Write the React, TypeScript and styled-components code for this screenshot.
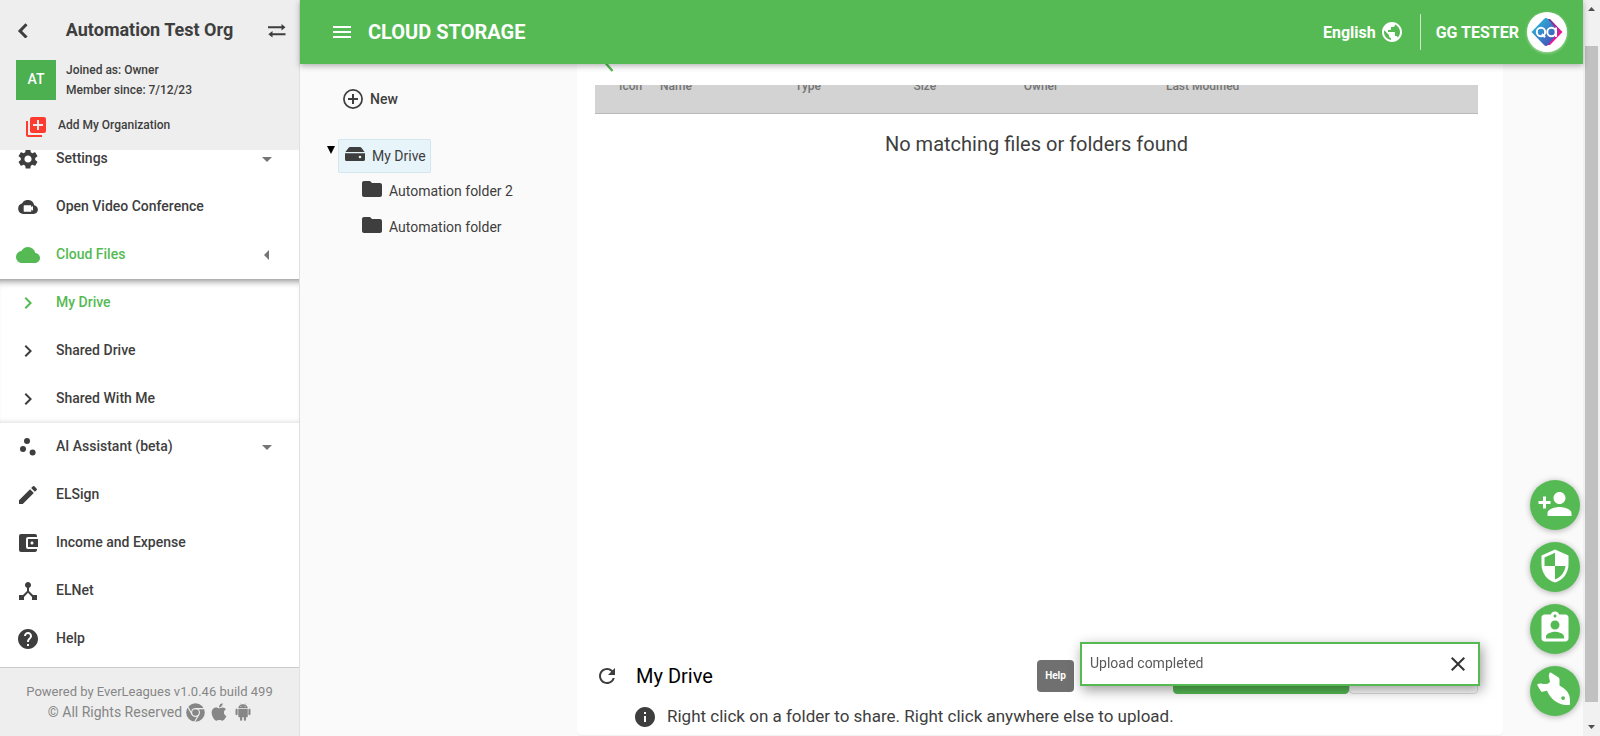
import React from "react";
import styled, { createGlobalStyle, css } from "styled-components";
import {
  MdAccountBalanceWallet,
  MdArrowDropDown,
  MdArrowLeft,
  MdAssignmentInd,
  MdChevronRight,
  MdClose,
  MdCloud,
  MdDeviceHub,
  MdEdit,
  MdFolder,
  MdHelp,
  MdInfo,
  MdLibraryAdd,
  MdMenu,
  MdPersonAdd,
  MdPublic,
  MdRefresh,
  MdScatterPlot,
  MdSecurity,
  MdSettings,
} from "react-icons/md";
import { FaApple } from "react-icons/fa";
import { AiFillAndroid } from "react-icons/ai";

const GREEN = "#55ba53";
const DARK = "#3e3e3e";

const GlobalStyle = createGlobalStyle`
  * { box-sizing: border-box; }
  html, body { height: 100%; margin: 0; }
  #root { height: 100%; }
  body {
    font-family: Roboto, "Liberation Sans", sans-serif;
    color: ${DARK};
    background: #fafafa;
    overflow: hidden;
  }
  button, select {
    font: inherit;
    color: inherit;
    background: none;
    border: 0;
    padding: 0;
    cursor: pointer;
  }
  a { color: inherit; text-decoration: none; }
  h1, h2, p, ul { margin: 0; padding: 0; }
  ul { list-style: none; }
  svg { display: block; flex: none; }
`;

const Shell = styled.div`
  display: flex;
  height: 100vh;
`;

/* Sidebar */

const Sidebar = styled.aside`
  display: flex;
  flex-direction: column;
  flex: none;
  width: 300px;
  background: #fff;
  border-right: 1px solid #e0e0e0;
`;

const OrgPanel = styled.div`
  flex: none;
  height: 150px;
  padding: 16px 12px 0 16px;
  background: #eee;
`;

const OrgTitleRow = styled.div`
  display: flex;
  align-items: center;
  justify-content: space-between;
  height: 28px;
`;

const OrgTitle = styled.h2`
  font-size: 18px;
  line-height: 28px;
  font-weight: 700;
`;

const OrgInfo = styled.div`
  display: flex;
  gap: 10px;
  margin-top: 16px;
  font-size: 12px;
  line-height: 20px;
  font-weight: 500;
`;

const OrgBadge = styled.div`
  width: 40px;
  height: 40px;
  background: #4caf50;
  color: #fff;
  font-size: 14px;
  line-height: 38px;
  text-align: center;
`;

const AddOrg = styled.button`
  display: flex;
  align-items: center;
  gap: 10px;
  margin-top: 11px;
  padding-left: 8px;
  font-size: 12px;
  line-height: 24px;
  font-weight: 500;

  svg { color: #ff3b30; margin-top: 4px; }
`;

const NavScroll = styled.nav`
  flex: 1;
  min-height: 0;
  overflow: hidden;
`;

const NavList = styled.ul`
  margin-top: -15px;
`;

const SubList = styled.ul`
  background: #fff;
  box-shadow: inset 0 8px 7px -6px #888, inset 0 -6px 5px -5px #ddd;
`;

const NavLink = styled.a<{ $active?: boolean }>`
  display: grid;
  grid-template-columns: 24px 1fr 24px;
  align-items: center;
  column-gap: 16px;
  height: 48px;
  padding: 0 20px 0 16px;
  font-size: 14px;
  font-weight: 500;
  color: ${(p) => (p.$active ? GREEN : DARK)};

  span { padding-bottom: 2px; }
  svg { justify-self: center; }
  svg:last-child:not(:first-child) { color: #757575; }
`;

const SidebarFooter = styled.footer`
  flex: none;
  height: 69px;
  padding-top: 14px;
  border-top: 1px solid #ccc;
  background: #eee;
  color: #868686;
  font-size: 13px;
  line-height: 20px;
  text-align: center;
`;

const Rights = styled.div`
  display: flex;
  align-items: center;
  justify-content: center;
  gap: 4px;
  height: 20px;
  padding-left: 2px;
  font-size: 14px;
`;

/* Main area */

const Main = styled.div`
  display: flex;
  flex-direction: column;
  flex: 1;
  min-width: 0;
  height: 100%;
`;

const TopBar = styled.header`
  position: relative;
  z-index: 1;
  display: flex;
  align-items: center;
  flex: none;
  height: 64px;
  padding: 0 16px 0 30px;
  background: ${GREEN};
  color: #fff;
  box-shadow: 0 2px 6px rgba(0, 0, 0, 0.3);
`;

const PageTitle = styled.h1`
  flex: 1;
  margin-left: 14px;
  font-size: 20px;
  font-weight: 700;
`;

const BarButton = styled.button`
  display: flex;
  align-items: center;
  gap: 4px;
  font-size: 16px;
  font-weight: 700;
`;

const Account = styled(BarButton)`
  gap: 8px;
  margin-left: 16px;
  padding-left: 15px;
  height: 36px;
  border-left: 1px solid rgba(255, 255, 255, 0.7);
`;

const Avatar = styled.span`
  display: grid;
  place-items: center;
  width: 40px;
  height: 40px;
  border-radius: 50%;
  background: #fff;
  box-shadow: 0 1px 3px rgba(255, 255, 255, 0.5);
`;

const Workspace = styled.div`
  display: flex;
  flex: 1;
  min-height: 0;
`;

const TreePanel = styled.section`
  flex: none;
  width: 277px;
  padding: 23px 0 0 27px;
`;

const NewButton = styled.button`
  display: flex;
  align-items: center;
  gap: 7px;
  margin-left: 16px;
  font-size: 14px;
  line-height: 24px;
  font-weight: 500;
`;

const TreeRoot = styled.div`
  display: flex;
  align-items: flex-start;
  gap: 3px;
  margin-top: 28px;
`;

const TreeToggle = styled.button`
  width: 8px;
  margin-top: 7px;
  color: #000;
`;

const TreeItem = styled.button<{ $selected?: boolean }>`
  display: flex;
  align-items: center;
  gap: 7px;
  height: 34px;
  padding: 0 4px 0 6px;
  border: 1px solid transparent;
  border-radius: 2px;
  font-size: 14px;

  svg { margin-bottom: 5px; }

  ${(p) =>
    p.$selected &&
    css`
      background: #e7f4f9;
      border-color: #d3e6ee;
    `}
`;

const TreeChildren = styled.ul`
  padding-left: 26px;

  li { height: 36px; padding-top: 1px; }
  ${TreeItem} { gap: 5px; }
`;

const FilePanel = styled.main`
  display: flex;
  flex-direction: column;
  flex: 1;
  min-width: 0;
  margin: 0 80px 1px 0;
  padding: 0 25px 0 18px;
  border-radius: 0 0 5px 5px;
  background: #fff;
  box-shadow: 0 1px 1px #f0f0f0;
`;

const BackStrip = styled.div`
  flex: none;
  height: 21px;
  overflow: hidden;
  padding-left: 8px;
  color: ${GREEN};
`;

const BackLink = styled.button`
  display: block;
  margin-top: -8px;
`;

const TableViewport = styled.div`
  flex: 1;
  min-height: 0;
  overflow: hidden;
`;

const FileTable = styled.table`
  width: 100%;
  margin-top: -27px;
  border-collapse: collapse;
  table-layout: fixed;

  th {
    height: 55px;
    padding: 2px 0 0;
    background: #d3d3d3;
    border-bottom: 1px solid #b9b9b9;
    color: #757575;
    font-size: 12px;
    line-height: 16px;
    font-weight: 500;
    text-align: left;
  }
  th:first-child { padding-left: 24px; }
  td {
    padding: 17px 0 0;
    font-size: 20px;
    line-height: 26px;
    text-align: center;
  }
`;

const PanelFooter = styled.div`
  flex: none;
  height: 80px;
`;

const FolderRow = styled.div`
  display: flex;
  align-items: center;
  height: 41px;
`;

const FolderName = styled.h2`
  flex: 1;
  margin-left: 17px;
  color: #000;
  font-size: 20px;
  font-weight: 400;
`;

const HelpButton = styled.button`
  width: 37px;
  height: 32px;
  margin-right: 99px;
  border-radius: 4px;
  background: #707070;
  color: #fff;
  font-size: 10px;
  font-weight: 700;
`;

const ActionButton = styled.button<{ $primary?: boolean }>`
  width: ${(p) => (p.$primary ? 176 : 129)}px;
  height: 36px;
  border: 1px solid ${(p) => (p.$primary ? GREEN : "#ddd")};
  border-radius: 4px;
  background: ${(p) => (p.$primary ? GREEN : "#fff")};
`;

const Hint = styled.p`
  display: flex;
  align-items: center;
  gap: 10px;
  padding-left: 38px;
  font-size: 17px;
  line-height: 40px;

  svg { margin-top: 2px; }
`;

/* Floating parts */

const Toast = styled.div`
  position: fixed;
  right: 120px;
  bottom: 50px;
  z-index: 2;
  display: flex;
  align-items: center;
  justify-content: space-between;
  width: 400px;
  height: 44px;
  padding: 0 8px;
  border: 2px solid ${GREEN};
  background: #fff;
  box-shadow: 2px 4px 12px rgba(0, 0, 0, 0.4);
  color: #5a5a5a;
  font-size: 14px;

  span { padding-bottom: 2px; }
  button { color: #333; }
`;

const QuickActions = styled.div`
  position: fixed;
  right: 20px;
  bottom: 20px;
  z-index: 2;
  display: grid;
  gap: 12px;
`;

const RoundButton = styled.button`
  display: grid;
  place-items: center;
  width: 50px;
  height: 50px;
  padding-bottom: 2px;
  border-radius: 50%;
  background: ${GREEN};
  color: #fff;
  box-shadow: 0 1px 6px rgba(0, 0, 0, 0.3);

  svg { overflow: visible; }
`;

const ScrollTrack = styled.div`
  display: flex;
  flex-direction: column;
  align-items: center;
  flex: none;
  width: 17px;
  padding: 7px 0;
  background: #f1f1f1;
  color: #505050;
`;

const ScrollSpace = styled.div<{ $size: number }>`
  flex: ${(p) => p.$size} 0 0;
`;

const ScrollThumb = styled.div`
  flex: 656 0 0;
  width: 13px;
  background: #c1c1c1;
`;

/* Drawings */

const ChevronBackIcon = () => (
  <svg width="16" height="16" viewBox="0 0 16 16" fill="none" stroke="currentColor" strokeWidth="3">
    <path d="M10.500 2.200 4 9l6.500 6.500" />
  </svg>
);

const SwapIcon = () => (
  <svg width="20" height="16" viewBox="0 0 20 16" fill="currentColor">
    <path d="M1 4.200h13.500V1.900L18.500 5.200l-4 3.300V6.200H1z" />
    <path d="M18.500 11.200H5.500V8.900L1.300 12.200l4.200 3.300v-2.300h13z" />
  </svg>
);

const CloudVideoIcon = () => (
  <svg width="20" height="14" viewBox="0 0 20 14">
    <path fill="currentColor" d="M16.2 5.2A6.6 6.6 0 0 0 3.9 3.5 5.3 5.3 0 0 0 .2 8.8C.2 11.700 2.500 14 5.300 14h10.300c2.400 0 4.300-1.900 4.300-4.400 0-2.300-1.600-4.200-3.700-4.400z" />
    <path fill="#fff" d="M6.300 5.200h6.400c.3 0 .6.3.6.600v1.500l1.700-1.300v4.800l-1.700-1.300v1.700c0 .3-.3.600-.600.600H6.300c-.3 0-.600-.3-.600-.600V5.800c0-.3.300-.600.600-.600z" />
  </svg>
);

const ChromeIcon = () => (
  <svg width="19" height="19" viewBox="0 0 20 20">
    <circle cx="10" cy="10" r="9.800" fill="currentColor" />
    <circle cx="10" cy="10" r="4.700" fill="#eee" />
    <circle cx="10" cy="10" r="3.500" fill="currentColor" />
    <path
      d="M10 5.900h9.500M6.450 12.050 1.700 3.800M13.550 12.050 8.800 20.300"
      fill="none"
      stroke="#eee"
      strokeWidth="1.200"
    />
  </svg>
);

const DriveIcon = () => (
  <svg width="20" height="14" viewBox="0 0 20 14" fill="currentColor">
    <path d="M3.800.6C4.100.2 4.500 0 5 0h10c.5 0 .9.2 1.200.6L19.600 5H.4z" />
    <path fillRule="evenodd" d="M0 6.200h20v6.300c0 .8-.7 1.500-1.500 1.500h-17A1.500 1.500 0 0 1 0 12.500zM15 8.700a1.300 1.300 0 1 0 0 2.600 1.300 1.300 0 0 0 0-2.600z" />
  </svg>
);

const PlusCircleIcon = () => (
  <svg width="20" height="20" viewBox="0 0 20 20" fill="none" stroke="currentColor">
    <circle cx="10" cy="10" r="9.100" strokeWidth="1.700" />
    <path d="M10 5v10M5 10h10" strokeWidth="2" />
  </svg>
);

const BackArrowIcon = () => (
  <svg width="12" height="16" viewBox="0 0 12 16" fill="none" stroke="currentColor" strokeWidth="2.400">
    <path d="M9.500 0 3 7.500l6.500 7.500" />
  </svg>
);

const RocketIcon = () => (
  <svg width="34" height="34" viewBox="0 0 34 34">
    <path
      fill="#fff"
      d="M12.800-.4 20.300 4.300c.8.5 1.200 1.200 1.200 2.100v6c4.600 2.300 8.200 5.600 9.700 9.900.9 3 .9 6.300.6 9.700-3.300.2-6.300.1-9.200-1C16.400 28.700 11.500 24 9 17.800l-4.600.9c-.7.1-1.200-.1-1.600-.8L-.5 12.600c-.5-.9-.1-1.600.8-1.800l2.500-.4c1.700.3 4.200.8 5.600.7 1.500-.3 2.900-1.200 3.600-2.300C11.700 7 11 4.500 10.800 3l.5-2.500c.2-.9.800-1.300 1.500-.9z"
    />
    <circle cx="25.100" cy="25.100" r="1.900" fill={GREEN} />
  </svg>
);

const AvatarLogo = () => (
  <svg width="32" height="28" viewBox="0 0 32 28">
    <defs>
      <linearGradient id="logoBlue" x1="0" y1="0" x2="1" y2="1">
        <stop offset="0" stopColor="#25c5e0" />
        <stop offset="1" stopColor="#4b3fb0" />
      </linearGradient>
      <linearGradient id="logoPink" x1="0" y1="0" x2="0" y2="1">
        <stop offset="0" stopColor="#5b3a9c" />
        <stop offset=".5" stopColor="#ee168c" />
        <stop offset="1" stopColor="#f0149a" />
      </linearGradient>
    </defs>
    <path fill="url(#logoPink)" d="M16 1h3l12.500 13L19 27h-3z" />
    <path fill="url(#logoBlue)" d="M13 1q2-2 4 0l10.500 13L17 27q-2 2-4 0L.5 14z" />
    <g fill="none" stroke="#fff" strokeWidth="2">
      <circle cx="10" cy="14" r="4.200" />
      <path d="m11 16 3 3.200" />
      <circle cx="20.500" cy="14" r="4.200" />
      <path d="M25 9.500V19" />
    </g>
  </svg>
);

const Triangle = ({ w, h, d }: { w: number; h: number; d: string }) => (
  <svg width={w} height={h} viewBox={`0 0 ${w} ${h}`} fill="currentColor">
    <path d={d} />
  </svg>
);

type NavEntry = { label: string; icon: React.ReactNode; active?: boolean; trailing?: React.ReactNode };

const topNav: NavEntry[] = [
  { label: "Settings", icon: <MdSettings size={24} />, trailing: <MdArrowDropDown size={24} /> },
  { label: "Open Video Conference", icon: <CloudVideoIcon /> },
  { label: "Cloud Files", icon: <MdCloud size={24} />, active: true, trailing: <MdArrowLeft size={24} /> },
];

const driveNav: NavEntry[] = [
  { label: "My Drive", icon: <MdChevronRight size={24} />, active: true },
  { label: "Shared Drive", icon: <MdChevronRight size={24} /> },
  { label: "Shared With Me", icon: <MdChevronRight size={24} /> },
];

const bottomNav: NavEntry[] = [
  { label: "AI Assistant (beta)", icon: <MdScatterPlot size={24} />, trailing: <MdArrowDropDown size={24} /> },
  { label: "ELSign", icon: <MdEdit size={24} /> },
  { label: "Income and Expense", icon: <MdAccountBalanceWallet size={24} /> },
  { label: "ELNet", icon: <MdDeviceHub size={24} /> },
  { label: "Help", icon: <MdHelp size={24} /> },
];

const NavItems = ({ items }: { items: NavEntry[] }) => (
  <>
    {items.map((item) => (
      <li key={item.label}>
        <NavLink href="#" $active={item.active}>
          {item.icon}
          <span>{item.label}</span>
          {item.trailing}
        </NavLink>
      </li>
    ))}
  </>
);

export default function App() {
  return (
    <Shell>
      <GlobalStyle />
      <Sidebar>
        <OrgPanel>
          <OrgTitleRow>
            <button aria-label="Back"><ChevronBackIcon /></button>
            <OrgTitle>Automation Test Org</OrgTitle>
            <button aria-label="Switch organization"><SwapIcon /></button>
          </OrgTitleRow>
          <OrgInfo>
            <OrgBadge>AT</OrgBadge>
            <div>
              <p>Joined as: Owner</p>
              <p>Member since: 7/12/23</p>
            </div>
          </OrgInfo>
          <AddOrg>
            <MdLibraryAdd size={24} />
            <span>Add My Organization</span>
          </AddOrg>
        </OrgPanel>
        <NavScroll>
          <NavList><NavItems items={topNav} /></NavList>
          <SubList><NavItems items={driveNav} /></SubList>
          <ul><NavItems items={bottomNav} /></ul>
        </NavScroll>
        <SidebarFooter>
          <p>Powered by EverLeagues v1.0.46 build 499</p>
          <Rights>
            © All Rights Reserved
            <ChromeIcon />
            <FaApple size={20} />
            <AiFillAndroid size={20} />
          </Rights>
        </SidebarFooter>
      </Sidebar>

      <Main>
        <TopBar>
          <BarButton aria-label="Menu"><MdMenu size={24} /></BarButton>
          <PageTitle>CLOUD STORAGE</PageTitle>
          <BarButton>English <MdPublic size={24} /></BarButton>
          <Account>
            GG TESTER
            <Avatar><AvatarLogo /></Avatar>
          </Account>
        </TopBar>
        <Workspace>
          <TreePanel>
            <NewButton><PlusCircleIcon /> New</NewButton>
            <TreeRoot>
              <TreeToggle aria-label="Collapse">
                <Triangle w={8} h={8} d="M0 0h8L4 8z" />
              </TreeToggle>
              <TreeItem $selected><DriveIcon /> My Drive</TreeItem>
            </TreeRoot>
            <TreeChildren>
              <li><TreeItem><MdFolder size={24} /> Automation folder 2</TreeItem></li>
              <li><TreeItem><MdFolder size={24} /> Automation folder</TreeItem></li>
            </TreeChildren>
          </TreePanel>
          <FilePanel>
            <BackStrip>
              <BackLink aria-label="Up one folder"><BackArrowIcon /></BackLink>
            </BackStrip>
            <TableViewport>
              <FileTable>
                <colgroup>
                  <col style={{ width: "7.36%" }} />
                  <col style={{ width: "15.3%" }} />
                  <col style={{ width: "13.4%" }} />
                  <col style={{ width: "12.5%" }} />
                  <col style={{ width: "16.1%" }} />
                  <col />
                </colgroup>
                <thead>
                  <tr>
                    <th>Icon</th>
                    <th>Name</th>
                    <th>Type</th>
                    <th>Size</th>
                    <th>Owner</th>
                    <th>Last Modified</th>
                  </tr>
                </thead>
                <tbody>
                  <tr><td colSpan={6}>No matching files or folders found</td></tr>
                </tbody>
              </FileTable>
            </TableViewport>
            <PanelFooter>
              <FolderRow>
                <button aria-label="Refresh"><MdRefresh size={24} /></button>
                <FolderName>My Drive</FolderName>
                <HelpButton>Help</HelpButton>
                <ActionButton $primary aria-label="Upload" />
                <ActionButton aria-label="Cancel" />
              </FolderRow>
              <Hint>
                <MdInfo size={24} />
                Right click on a folder to share. Right click anywhere else to upload.
              </Hint>
            </PanelFooter>
          </FilePanel>
        </Workspace>
      </Main>

      <ScrollTrack aria-hidden="true">
        <Triangle w={7} h={4} d="M0 4h7L3.500 0z" />
        <ScrollSpace $size={35} />
        <ScrollThumb />
        <ScrollSpace $size={23} />
        <Triangle w={7} h={4} d="M0 0h7L3.500 4z" />
      </ScrollTrack>

      <Toast role="status">
        <span>Upload completed</span>
        <button aria-label="Dismiss"><MdClose size={24} /></button>
      </Toast>
      <QuickActions>
        <RoundButton aria-label="Add person"><MdPersonAdd size={36} /></RoundButton>
        <RoundButton aria-label="Security"><MdSecurity size={36} /></RoundButton>
        <RoundButton aria-label="Assignments"><MdAssignmentInd size={36} /></RoundButton>
        <RoundButton aria-label="Quick start"><RocketIcon /></RoundButton>
      </QuickActions>
    </Shell>
  );
}
